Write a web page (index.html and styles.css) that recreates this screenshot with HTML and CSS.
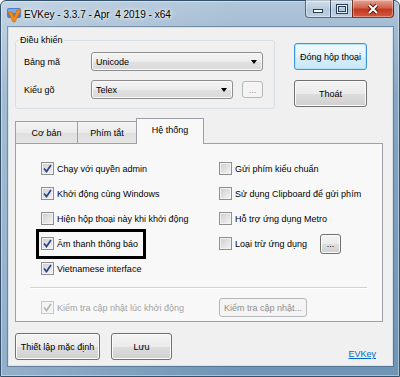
FILE: index.html
```html
<!DOCTYPE html>
<html lang="vi">
<head>
    <meta charset="UTF-8">
    <title>EVKey</title>
    <link rel="stylesheet" href="styles.css">
</head>
<body>
    <div class="window">
        <div class="titlebar">
            <svg class="app-icon" width="16" height="16" viewBox="0 0 16 16">
                <rect x="1" y="1" width="14" height="10" rx="2" fill="#4a7fd0"/>
                <rect x="2" y="2" width="12" height="4" rx="1" fill="#7fa9e6"/>
                <path d="M2 5 L6 5 L8 10 L11 3 L15 3 L9 15 L7 15 Z" fill="#f08a1c" stroke="#c9650a" stroke-width="0.6"/>
            </svg>
            <span class="title">EVKey - 3.3.7 - Apr  4 2019 - x64</span>
            <div class="caption-buttons">
                <span class="cap-btn cap-min">
                    <svg width="12" height="6" viewBox="0 0 12 6"><rect x="1.5" y="1.5" width="9" height="3" fill="#fff" stroke="#2b3f57"/></svg>
                </span>
                <span class="cap-btn cap-max">
                    <svg width="12" height="10" viewBox="0 0 12 10"><rect x="1.5" y="1.5" width="9" height="7" fill="none" stroke="#2b3f57" stroke-width="3"/><rect x="1.5" y="1.5" width="9" height="7" fill="none" stroke="#e8eef5" stroke-width="1"/></svg>
                </span>
                <span class="cap-btn cap-close">
                    <svg width="14" height="12" viewBox="0 0 14 12"><path d="M3 2 L11 10 M11 2 L3 10" stroke="#5a1a12" stroke-width="4"/><path d="M3 2 L11 10 M11 2 L3 10" stroke="#fff" stroke-width="2"/></svg>
                </span>
            </div>
        </div>

        <div class="client">
            <div class="top-row">
                <fieldset class="group">
                    <legend>Điều khiển</legend>
                    <div class="field-row">
                        <span class="field-label">Bảng mã</span>
                        <div class="combo combo-wide">Unicode<span class="arrow"></span></div>
                    </div>
                    <div class="field-row">
                        <span class="field-label">Kiểu gõ</span>
                        <div class="combo combo-narrow">Telex<span class="arrow"></span></div>
                        <span class="btn btn-small btn-disabled">...</span>
                    </div>
                </fieldset>
                <div class="side-buttons">
                    <span class="btn btn-side btn-default">Đóng hộp thoại</span>
                    <span class="btn btn-side">Thoát</span>
                </div>
            </div>

            <div class="tabs">
                <span class="tab tab-1">Cơ bản</span>
                <span class="tab tab-2">Phím tắt</span>
                <span class="tab tab-active">Hệ thống</span>
            </div>

            <div class="tab-panel">
                <div class="options">
                    <div class="opt"><span class="check checked"><svg width="11" height="11" viewBox="0 0 11 11"><path d="M2 5.5 L4.5 8.5 L9 2" fill="none" stroke="#2c4383" stroke-width="1.7"/></svg></span>Chạy với quyền admin</div>
                    <div class="opt"><span class="check"></span>Gửi phím kiểu chuẩn</div>
                    <div class="opt"><span class="check checked"><svg width="11" height="11" viewBox="0 0 11 11"><path d="M2 5.5 L4.5 8.5 L9 2" fill="none" stroke="#2c4383" stroke-width="1.7"/></svg></span>Khởi động cùng Windows</div>
                    <div class="opt"><span class="check"></span>Sử dụng Clipboard để gửi phím</div>
                    <div class="opt"><span class="check"></span>Hiện hộp thoại này khi khởi động</div>
                    <div class="opt"><span class="check"></span>Hỗ trợ ứng dụng Metro</div>
                    <div class="opt"><span class="highlight"><span class="check checked"><svg width="11" height="11" viewBox="0 0 11 11"><path d="M2 5.5 L4.5 8.5 L9 2" fill="none" stroke="#2c4383" stroke-width="1.7"/></svg></span>Âm thanh thông báo</span></div>
                    <div class="opt"><span class="check"></span>Loại trừ ứng dụng<span class="btn btn-small btn-exclude">...</span></div>
                    <div class="opt"><span class="check checked"><svg width="11" height="11" viewBox="0 0 11 11"><path d="M2 5.5 L4.5 8.5 L9 2" fill="none" stroke="#2c4383" stroke-width="1.7"/></svg></span>Vietnamese interface</div>
                </div>

                <div class="separator"></div>

                <div class="update-row">
                    <div class="opt opt-disabled"><span class="check check-disabled"><svg width="11" height="11" viewBox="0 0 11 11"><path d="M2 5.5 L4.5 8.5 L9 2" fill="none" stroke="#b5b5b5" stroke-width="1.7"/></svg></span>Kiểm tra cập nhật lúc khởi động</div>
                    <span class="btn btn-update btn-disabled">Kiểm tra cập nhật...</span>
                </div>
            </div>

            <div class="bottom-row">
                <span class="btn btn-bottom btn-reset">Thiết lập mặc định</span>
                <span class="btn btn-bottom btn-save">Lưu</span>
                <a class="home-link" href="#">EVKey</a>
            </div>
        </div>
    </div>
</body>
</html>
```

FILE: styles.css
```css
* {
    margin: 0;
    padding: 0;
    box-sizing: border-box;
}

body {
    width: 400px;
    height: 377px;
    overflow: hidden;
    font-family: "Liberation Sans", Arial, sans-serif;
    font-size: 9px;
    color: #000;
}

/* khung cua so Aero */
.window {
    width: 400px;
    height: 377px;
    display: flex;
    flex-direction: column;
    padding: 0 6px 10px 7px;
    border: 1px solid #33506c;
    border-radius: 6px 6px 0 0;
    background:
        linear-gradient(to right, rgba(255, 255, 255, 0.25), rgba(255, 255, 255, 0) 60%),
        linear-gradient(#b0c6da, #86a6c2 25%, #7094b6);
    box-shadow: inset 0 0 0 1px rgba(255, 255, 255, 0.4);
}

.titlebar {
    height: 26px;
    display: flex;
    align-items: center;
    margin-left: -2px;
}

.app-icon {
    flex: none;
    margin-top: 1px;
}

.title {
    margin-left: 2px;
    font-size: 10px;
    white-space: pre;
    color: #000;
    text-shadow: 0 0 6px #fff, 0 0 3px #fff;
}

.caption-buttons {
    display: flex;
    margin-left: auto;
    margin-right: -1px;
    align-self: flex-start;
    margin-top: -1px;
}

.cap-btn {
    height: 18px;
    display: flex;
    align-items: center;
    justify-content: center;
    border: 1px solid rgba(30, 50, 80, 0.65);
    border-top: none;
    background: linear-gradient(rgba(255, 255, 255, 0.45), rgba(255, 255, 255, 0.15) 50%, rgba(255, 255, 255, 0.05) 51%, rgba(255, 255, 255, 0.25));
    box-shadow: inset 0 0 0 1px rgba(255, 255, 255, 0.35);
}

.cap-min {
    width: 26px;
    border-radius: 0 0 0 4px;
    padding-top: 5px;
}

.cap-max {
    width: 23px;
    margin-left: -1px;
}

.cap-close {
    width: 42px;
    margin-left: -1px;
    border-radius: 0 0 4px 0;
    border-color: rgba(70, 20, 10, 0.7);
    background: linear-gradient(#e7a392, #d0654f 45%, #c0391f 55%, #d9573b);
}

/* vung noi dung */
.client {
    flex: 1;
    background: #f0f0f0;
    border: 1px solid #d6e2ec;
    box-shadow: 0 0 0 1px rgba(50, 80, 110, 0.45);
    padding: 0 0 0 6px;
}

.top-row {
    display: flex;
    align-items: flex-start;
}

.group {
    width: 260px;
    margin-top: 6px;
    padding: 6px 11px 9px 8px;
    border: 1px solid #d5dfe5;
    border-radius: 3px;
}

.group legend {
    line-height: 12px;
    margin-left: -5px;
    padding: 0 1px;
}

.field-row {
    display: flex;
    align-items: center;
    height: 19px;
}

.field-row + .field-row {
    margin-top: 9px;
}

.field-label {
    width: 67px;
}

.combo {
    height: 19px;
    display: flex;
    align-items: center;
    padding-left: 4px;
    border: 1px solid #8d8d8d;
    border-radius: 3px;
    background: linear-gradient(#f4f4f4, #ececec 50%, #e0e0e0 51%, #d9d9d9);
    box-shadow: inset 0 0 0 1px #fafafa;
}

.combo-wide {
    width: 172px;
}

.combo-narrow {
    width: 142px;
}

.arrow {
    margin-left: auto;
    margin-right: 5px;
    border-left: 3.5px solid transparent;
    border-right: 3.5px solid transparent;
    border-top: 4px solid #000;
}

.btn {
    display: flex;
    align-items: center;
    justify-content: center;
    border: 1px solid #707070;
    border-radius: 3px;
    background: linear-gradient(#f4f4f4, #ebebeb 50%, #dddddd 51%, #d0d0d0);
    box-shadow: inset 0 0 0 1px #fbfbfb;
    white-space: nowrap;
}

.btn-small {
    width: 21px;
    height: 17px;
    margin-left: 9px;
}

.btn-disabled {
    color: #8f8f8f;
    border-color: #b5b8ba;
    background: #f4f4f4;
    box-shadow: none;
}

.side-buttons {
    display: flex;
    flex-direction: column;
    gap: 10px;
    margin-left: 19px;
    margin-top: 15px;
}

.btn-side {
    width: 73px;
    height: 27px;
}

.btn-default {
    border-color: #3c95d4;
    background: linear-gradient(#f1f9fe, #e4f3fc 50%, #d5edfa 51%, #cbe8f8);
    box-shadow: inset 0 0 0 1px #b4e4fb;
}

/* tab */
.tabs {
    display: flex;
    align-items: flex-end;
    height: 26px;
    margin-top: 9px;
    margin-bottom: -1px;
    position: relative;
    z-index: 1;
}

.tab {
    height: 22px;
    margin-bottom: 1px;
    display: flex;
    align-items: center;
    justify-content: center;
    border: 1px solid #9da0a8;
    border-bottom: none;
    background: linear-gradient(#f3f3f3, #ebebeb 50%, #dedede 51%, #e6e6e6);
}

.tab-1 {
    width: 63px;
}

.tab-2 {
    width: 60px;
    margin-left: -1px;
}

.tab-active {
    width: 68px;
    height: 26px;
    margin-left: -1px;
    margin-bottom: 0;
    padding-bottom: 4px;
    background: #f8f8f8;
}

.tab-panel {
    width: 368px;
    height: 179px;
    border: 1px solid #9da0a8;
    background: #f8f8f8;
    padding: 12px 0 0 25px;
}

.options {
    display: grid;
    grid-template-columns: 178px auto;
}

.opt {
    height: 25px;
    display: flex;
    align-items: center;
    white-space: nowrap;
}

.check {
    flex: none;
    width: 13px;
    height: 13px;
    margin-right: 3px;
    display: flex;
    align-items: center;
    justify-content: center;
    border: 1px solid #8e8f8f;
    background: linear-gradient(135deg, #cdcdcd, #e9e9e9 70%, #f7f7f7);
    box-shadow: inset 0 0 0 1px #f2f2f2;
}

.highlight {
    display: flex;
    align-items: center;
    height: 24px;
    margin-left: -2px;
    padding: 0 5px 0 2px;
    outline: 3px solid #000;
}

.btn-exclude {
    height: 20px;
    margin-left: 13px;
}

.separator {
    height: 2px;
    margin: 6px 15px 0 -11px;
    border-top: 1px solid #d2d2d2;
    border-bottom: 1px solid #fff;
}

.update-row {
    display: flex;
    align-items: center;
    margin-top: 9px;
    height: 19px;
}

.opt-disabled {
    width: 178px;
    color: #a3a3a3;
}

.check-disabled {
    border-color: #c8c8c8;
    background: #f4f4f4;
    box-shadow: none;
}

.btn-update {
    width: 88px;
    height: 19px;
}

.bottom-row {
    display: flex;
    align-items: flex-end;
    margin-top: 11px;
    padding-right: 16px;
}

.btn-bottom {
    height: 27px;
}

.btn-reset {
    width: 85px;
}

.btn-save {
    width: 61px;
    margin-left: 11px;
}

.home-link {
    margin-left: auto;
    margin-bottom: 1px;
    color: #0066cc;
}
```
